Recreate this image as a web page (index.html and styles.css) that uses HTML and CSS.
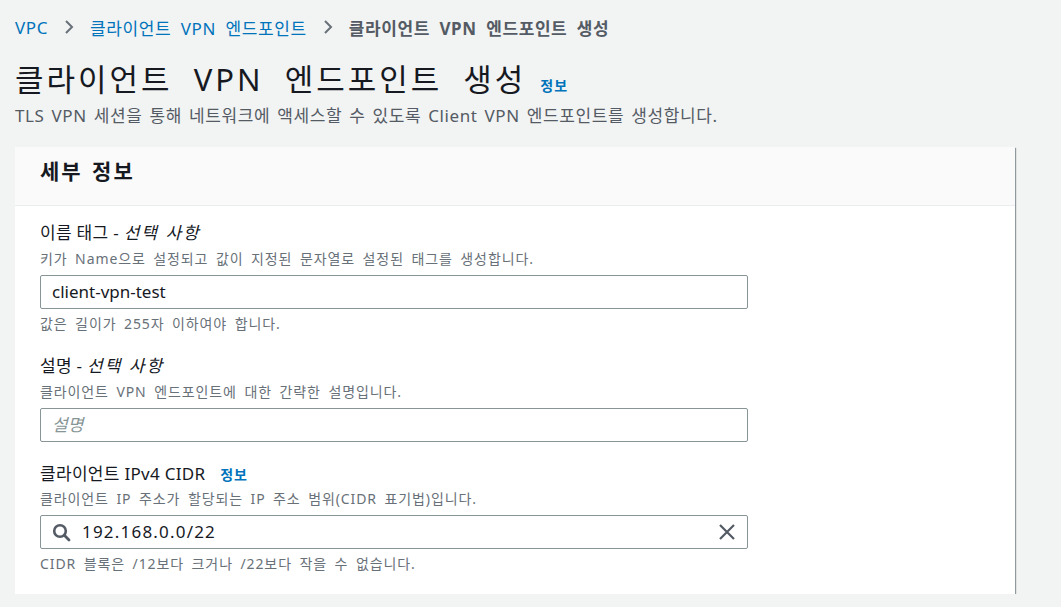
FILE: index.html
```html
<!DOCTYPE html>
<html lang="ko">
<head>
    <meta charset="UTF-8">
    <meta name="viewport" content="width=device-width, initial-scale=1.0">
    <title>클라이언트 VPN 엔드포인트 생성</title>
    <link rel="stylesheet" href="styles.css">
</head>
<body>
    <div class="page">
        <nav class="crumbs">
            <a href="#">VPC</a>
            <svg class="chev" width="16" height="16" viewBox="0 0 16 16"><path d="M5 2 11 8l-6 6" fill="none" stroke="#687078" stroke-width="2"/></svg>
            <a href="#">클라이언트 VPN 엔드포인트</a>
            <svg class="chev" width="16" height="16" viewBox="0 0 16 16"><path d="M5 2 11 8l-6 6" fill="none" stroke="#687078" stroke-width="2"/></svg>
            <span class="current">클라이언트 VPN 엔드포인트 생성</span>
        </nav>

        <div class="head">
            <h1>클라이언트 VPN 엔드포인트 생성</h1>
            <a class="info" href="#">정보</a>
        </div>
        <p class="lead">TLS VPN 세션을 통해 네트워크에 액세스할 수 있도록 Client VPN 엔드포인트를 생성합니다.</p>

        <div class="card">
            <div class="card-head">세부 정보</div>
            <div class="card-body">
                <div class="field">
                    <div class="label">이름 태그 - <i>선택 사항</i></div>
                    <div class="desc">키가 Name으로 설정되고 값이 지정된 문자열로 설정된 태그를 생성합니다.</div>
                    <div class="input">client-vpn-test</div>
                    <div class="hint">값은 길이가 255자 이하여야 합니다.</div>
                </div>
                <div class="field">
                    <div class="label">설명 - <i>선택 사항</i></div>
                    <div class="desc">클라이언트 VPN 엔드포인트에 대한 간략한 설명입니다.</div>
                    <div class="input placeholder"><i>설명</i></div>
                </div>
                <div class="field">
                    <div class="label">클라이언트 IPv4 CIDR <a class="info" href="#">정보</a></div>
                    <div class="desc">클라이언트 IP 주소가 할당되는 IP 주소 범위(CIDR 표기법)입니다.</div>
                    <div class="input search">
                        <svg class="ico" width="19" height="19" viewBox="0 0 19 19"><circle cx="8" cy="8" r="5.8" fill="none" stroke="#545b64" stroke-width="2.6"/><path d="M12.3 12.3 17 17" stroke="#545b64" stroke-width="2.8" stroke-linecap="round"/></svg>
                        <span class="val">192.168.0.0/22</span>
                        <svg class="clear" width="18" height="18" viewBox="0 0 18 18"><path d="M2 2 16 16M16 2 2 16" stroke="#545b64" stroke-width="2.2"/></svg>
                    </div>
                    <div class="hint">CIDR 블록은 /12보다 크거나 /22보다 작을 수 없습니다.</div>
                </div>
            </div>
        </div>
    </div>
</body>
</html>
```

FILE: styles.css
```css
body {
    margin: 0;
    background-color: #f2f3f3;
    font-family: "Noto Sans", "Noto Sans CJK KR", sans-serif;
    color: #16191f;
}
a {
    color: #0073bb;
    text-decoration: none;
}
.page {
    width: 1000px;
    padding: 13px 15px 0 15px;
}
.crumbs {
    display: flex;
    align-items: center;
    gap: 13px;
    font-size: 17px;
    letter-spacing: 0.6px;
    word-spacing: 4.5px;
    height: 28px;
}
.crumbs .current {
    color: #545b64;
    font-weight: bold;
}
.head {
    display: flex;
    align-items: baseline;
    gap: 14px;
    margin-top: 16px;
}
h1 {
    margin: 0;
    font-size: 31px;
    font-weight: normal;
    letter-spacing: 3px;
    word-spacing: 10px;
    line-height: 44px;
}
.info {
    font-size: 14px;
    font-weight: bold;
    letter-spacing: 1px;
    word-spacing: 0;
}
.lead {
    margin: 3px 0 0 0;
    font-size: 17px;
    letter-spacing: 0.6px;
    word-spacing: 2px;
    color: #545b64;
    line-height: 24px;
}
.card {
    margin-top: 19px;
    background-color: #fff;
    box-shadow: 1px 1px 1px 0 rgba(0,28,36,0.3), 1px 1px 1px 0 rgba(0,28,36,0.15);
}
.card-head {
    background-color: #fafafa;
    border-bottom: 1px solid #eaeded;
    padding: 0 25px;
    height: 58px;
    line-height: 48px;
    font-size: 21px;
    letter-spacing: 2px;
    word-spacing: 2px;
    font-weight: bold;
}
.card-body {
    padding: 15px 25px 20px 25px;
}
.field {
    margin-bottom: 20px;
}
.field:last-child {
    margin-bottom: 0;
}
.label {
    font-size: 17px;
    letter-spacing: 0.3px;
    line-height: 24px;
}
.label i {
    letter-spacing: 2px;
}
.label .info {
    margin-left: 10px;
}
.desc, .hint {
    font-size: 14px;
    letter-spacing: 0.9px;
    word-spacing: 3px;
    color: #687078;
    line-height: 20px;
}
.desc {
    margin: 4px 0 6px 0;
}
.field:last-child .desc {
    margin-top: 2px;
}
.hint {
    margin-top: 5px;
}
.input {
    box-sizing: border-box;
    width: 708px;
    height: 34px;
    border: 1px solid #879596;
    border-radius: 2px;
    padding: 0 11px;
    font-size: 17px;
    line-height: 32px;
    display: flex;
    align-items: center;
}
.placeholder {
    color: #879596;
}
.search .val {
    flex: 1;
    margin-left: 11px;
    letter-spacing: 1.2px;
}
```
